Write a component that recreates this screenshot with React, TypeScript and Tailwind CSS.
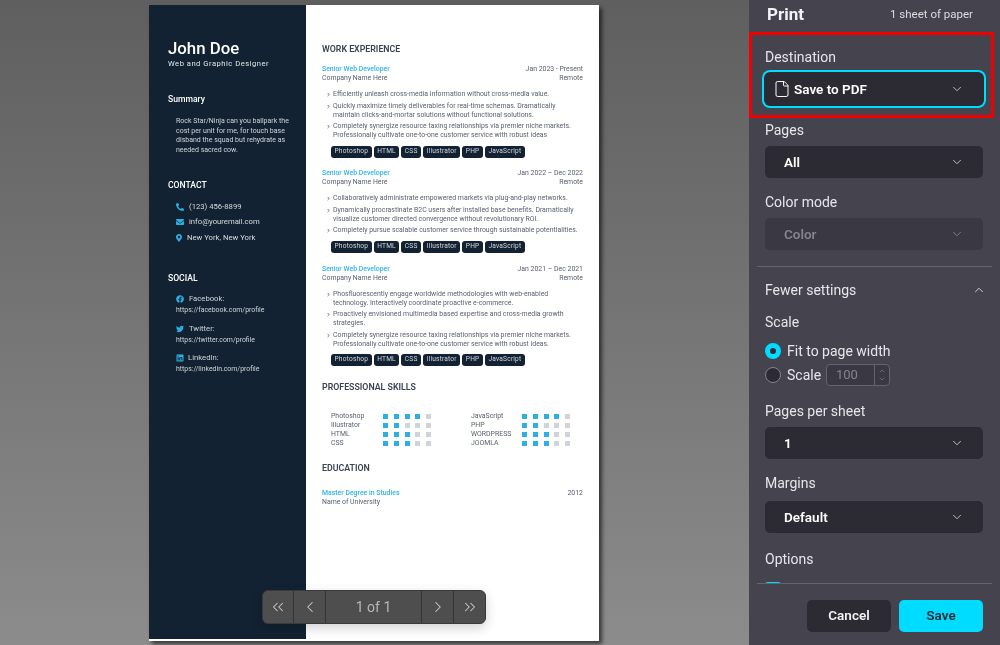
import { ChevronDown, ChevronLeft, ChevronRight, ChevronUp, ChevronsLeft, ChevronsRight, File } from "lucide-react"
import { FaEnvelope, FaFacebook, FaLinkedin, FaMapMarkerAlt, FaPhoneAlt, FaTwitter } from "react-icons/fa"

const TAGS = ["Photoshop", "HTML", "CSS", "Illustrator", "PHP", "JavaScript"]

const JOBS = [
    {
        date: "Jan 2023 - Present",
        mt: "mt-[11px]",
        listMt: "mt-[7px]",
        tagsMt: "mt-[6px]",
        bullets: [
            ["Efficiently unleash cross-media information without cross-media value."],
            ["Quickly maximize timely deliverables for real-time schemas. Dramatically", "maintain clicks-and-mortar solutions without functional solutions."],
            ["Completely synergize resource taxing relationships via premier niche markets.", "Professionally cultivate one-to-one customer service with robust ideas"],
        ],
    },
    {
        date: "Jan 2022 – Dec 2022",
        mt: "mt-[11px]",
        listMt: "mt-[7px]",
        tagsMt: "mt-[6px]",
        bullets: [
            ["Collaboratively administrate empowered markets via plug-and-play networks."],
            ["Dynamically procrastinate B2C users after installed base benefits. Dramatically", "visualize customer directed convergence without revolutionary ROI."],
            ["Completely pursue scalable customer service through sustainable potentialities."],
        ],
    },
    {
        date: "Jan 2021 – Dec 2021",
        mt: "mt-[12px]",
        listMt: "mt-[6.5px]",
        tagsMt: "mt-[5px]",
        bullets: [
            ["Phosfluorescently engage worldwide methodologies with web-enabled", "technology. Interactively coordinate proactive e-commerce."],
            ["Proactively envisioned multimedia based expertise and cross-media growth", "strategies."],
            ["Completely synergize resource taxing relationships via premier niche markets.", "Professionally cultivate one-to-one customer service with robust ideas."],
        ],
    },
]

const SKILLS_LEFT: [string, number][] = [["Photoshop", 4], ["Illustrator", 2], ["HTML", 3], ["CSS", 3]]
const SKILLS_RIGHT: [string, number][] = [["JavaScript", 4], ["PHP", 2], ["WORDPRESS", 3], ["JOOMLA", 3]]

function Skills({ items, labelWidth }: { items: [string, number][]; labelWidth: string }) {
    return (
        <div className="flex flex-col">
            {items.map(([name, level]) => (
                <div key={name} className="flex h-[9px] items-center">
                    <span className={`${labelWidth} text-[6.9px] text-[#5a6070]`}>{name}</span>
                    <div className="flex gap-[5.75px]">
                        {[1, 2, 3, 4, 5].map((n) => (
                            <span key={n} className={n <= level ? "h-[5px] w-[5px] bg-[#2bb0e6]" : "h-[5px] w-[5px] bg-[#d1d3da]"} />
                        ))}
                    </div>
                </div>
            ))}
        </div>
    )
}

function Heading({ children, className }: { children: string; className: string }) {
    return <h2 className={`h-[10px] text-[8.8px] leading-[10px] font-semibold text-[#3b4252] ${className}`}>{children}</h2>
}

function SideHeading({ children, className }: { children: string; className: string }) {
    return <h3 className={`h-[10px] text-[8.6px] leading-[10px] font-medium text-white ${className}`}>{children}</h3>
}

function Resume() {
    return (
        <div className="flex h-[634px] font-['Roboto',sans-serif] blur-[0.5px]">
            <aside className="w-[157px] bg-[#122232] pl-[19px] pt-[33px] text-[#d6dade]">
                <h1 className="h-[20px] text-[16.8px] leading-[20px] font-medium text-white">John Doe</h1>
                <p className="mt-[1px] text-[7.6px] leading-[10px] tracking-[0.5px] text-[#e4e7ea]">Web and Graphic Designer</p>
                <SideHeading className="mt-[25px]">Summary</SideHeading>
                <p className="mt-[13px] pl-[8px] text-[7px] leading-[9.5px] text-[#cfd4d9]">
                    Rock Star/Ninja can you ballpark the<br />
                    cost per unit for me, for touch base<br />
                    disband the squad but rehydrate as<br />
                    needed sacred cow.
                </p>
                <SideHeading className="mt-[25px]">CONTACT</SideHeading>
                <div className="mt-[12px] flex flex-col gap-[5px] pl-[8px] text-[7.7px] leading-[10px]">
                    <div className="flex h-[10px] items-center gap-[5px]"><FaPhoneAlt className="h-[8px] w-[8px] text-[#2bb0e6]" />(123) 456-8899</div>
                    <div className="mb-[1px] flex h-[10px] items-center gap-[5px]"><FaEnvelope className="h-[8px] w-[8px] text-[#2bb0e6]" />info@youremail.com</div>
                    <div className="flex h-[10px] items-center gap-[5px]"><FaMapMarkerAlt className="h-[8px] w-[6px] text-[#2bb0e6]" />New York, New York</div>
                </div>
                <SideHeading className="mt-[30px]">SOCIAL</SideHeading>
                <div className="mt-[11px] pl-[8px] text-[#cfd4d9]">
                    <div className="flex h-[10px] items-center gap-[5px] text-[7.7px]"><FaFacebook className="h-[8px] w-[8px] text-[#2bb0e6]" />Facebook:</div>
                    <p className="mt-[1px] text-[6.9px] leading-[10px]">https://facebook.com/profile</p>
                    <div className="mt-[9px] flex h-[10px] items-center gap-[5px] text-[7.7px]"><FaTwitter className="h-[8px] w-[8px] text-[#2bb0e6]" />Twitter:</div>
                    <p className="mt-[1px] text-[6.9px] leading-[10px]">https://twitter.com/profile</p>
                    <div className="mt-[8px] flex h-[10px] items-center gap-[4px] text-[7.7px]"><FaLinkedin className="h-[8px] w-[8px] text-[#2bb0e6]" />LinkedIn:</div>
                    <p className="mt-[1px] text-[6.9px] leading-[10px]">https://linkedin.com/profile</p>
                </div>
            </aside>
            <main className="flex-1 pl-[16px] pr-[16px] pt-[39px]">
                <Heading className="mb-0">WORK EXPERIENCE</Heading>
                {JOBS.map((job) => (
                    <section key={job.date} className={job.mt}>
                        <div className="flex h-[9px] items-center justify-between text-[6.9px] leading-[9px] text-[#5a6070]">
                            <span className="font-medium text-[#2fb3ea]">Senior Web Developer</span>
                            <span>{job.date}</span>
                        </div>
                        <div className="flex h-[9px] items-center justify-between text-[6.9px] leading-[9px] text-[#5a6070]">
                            <span>Company Name Here</span>
                            <span>Remote</span>
                        </div>
                        <ul className={`${job.listMt} flex flex-col gap-[2.5px] text-[6.9px] leading-[9px] text-[#5b6172]`}>
                            {job.bullets.map((lines) => (
                                <li key={lines[0]} className="flex">
                                    <ChevronRight className="mt-[2px] ml-[4px] mr-[2px] h-[5px] w-[5px] shrink-0 text-[#222]" strokeWidth={3} />
                                    <span className="whitespace-nowrap">
                                        {lines.map((line) => (
                                            <span key={line} className="block">{line}</span>
                                        ))}
                                    </span>
                                </li>
                            ))}
                        </ul>
                        <div className={`${job.tagsMt} flex gap-[2px] pl-[9px]`}>
                            {TAGS.map((tag) => (
                                <span key={tag} className="flex h-[12px] items-center rounded-[3px] bg-[#122232] px-[3.5px] text-[6.6px] tracking-[0.2px] text-[#d3d7db]">{tag}</span>
                            ))}
                        </div>
                    </section>
                ))}
                <Heading className="mt-[16px]">PROFESSIONAL SKILLS</Heading>
                <div className="mt-[20.5px] flex pl-[9px]">
                    <Skills items={SKILLS_LEFT} labelWidth="w-[52px]" />
                    <div className="w-[40px]" />
                    <Skills items={SKILLS_RIGHT} labelWidth="w-[51px]" />
                </div>
                <Heading className="mt-[14.5px]">EDUCATION</Heading>
                <div className="mt-[16.5px] flex h-[9px] items-center justify-between text-[6.9px] leading-[9px] text-[#5a6070]">
                    <span className="font-medium text-[#2fb3ea]">Master Degree in Studies</span>
                    <span>2012</span>
                </div>
                <p className="text-[6.9px] leading-[9px] text-[#5a6070]">Name of University</p>
            </main>
        </div>
    )
}

function Pager() {
    const btn = "flex h-full w-[32px] items-center justify-center border-r border-[#333]"
    return (
        <div className="absolute left-[262px] top-[590px] flex h-[34px] w-[224px] items-center overflow-hidden rounded-[6px] border border-[#3a3a3a] bg-[#4e4e4e] text-[#cdcdcd] shadow-[0_4px_12px_rgba(0,0,0,0.18)]">
            <div className="flex h-full w-[31px] items-center justify-center border-r border-[#333]"><ChevronsLeft className="h-[18px] w-[18px]" strokeWidth={1.4} /></div>
            <div className={btn}><ChevronLeft className="h-[18px] w-[18px]" strokeWidth={1.4} /></div>
            <div className="flex h-full w-[96px] items-center justify-center border-r border-[#333] font-['Roboto',sans-serif] text-[14px] text-[#b8b8b8]">1 of 1</div>
            <div className={btn}><ChevronRight className="h-[18px] w-[18px]" strokeWidth={1.4} /></div>
            <div className="flex h-full flex-1 items-center justify-center"><ChevronsRight className="h-[18px] w-[18px]" strokeWidth={1.4} /></div>
        </div>
    )
}

function Select({ label, value, className, disabled, focused, icon, gap = "mt-[7px]" }: { label: string; value: string; className: string; disabled?: boolean; focused?: boolean; icon?: boolean; gap?: string }) {
    return (
        <div className={className}>
            <p className="h-[20px] text-[14px] leading-[22px] text-[#e6e6ea]">{label}</p>
            <div
                className={`${gap} flex h-[32px] w-[218px] items-center justify-between rounded-[5px] pr-[19px] ${icon ? "pl-[8px]" : "pl-[19px]"} ${
                    disabled ? "bg-[#3a3842] text-[#85838c]" : "bg-[#2c2a33] text-white"
                } ${focused ? "shadow-[0_0_0_1px_#2c2a33,0_0_0_3px_#00dcff]" : ""}`}
            >
                <span className="flex items-center gap-[3px] text-[13.5px] font-semibold">
                    {icon && <File className="h-[18px] w-[18px]" strokeWidth={1.3} />}
                    {value}
                </span>
                <ChevronDown className={disabled ? "h-[14px] w-[14px] text-[#85838c]" : "h-[14px] w-[14px] text-[#d0d0d4]"} strokeWidth={1.5} />
            </div>
        </div>
    )
}

function PrintPanel() {
    return (
        <div className="flex h-[645px] w-[251px] flex-col bg-[#45434e] font-['Roboto',sans-serif]">
            <div className="h-[583px] overflow-hidden">
                <div className="flex h-[30px] items-center justify-between pl-[18px] pr-[27px]">
                    <span className="text-[17px] font-bold text-[#f3f3f5]">Print</span>
                    <span className="text-[11.5px] text-[#dcdce0]">1 sheet of paper</span>
                </div>
                <div className="pl-[16px]">
                    <Select label="Destination" value="Save to PDF" className="mt-[16px]" focused icon />
                    <Select label="Pages" value="All" className="mt-[14px]" />
                    <Select label="Color mode" value="Color" className="mt-[13px]" disabled />
                </div>
                <div className="mx-[8px] mt-[16px] h-px bg-[#65636d]" />
                <div className="mt-[13px] flex h-[20px] items-center justify-between pl-[16px] pr-[14px]">
                    <span className="text-[14px] leading-[20px] text-[#e6e6ea]">Fewer settings</span>
                    <ChevronUp className="h-[14px] w-[14px] text-[#e0e0e4]" strokeWidth={1.5} />
                </div>
                <div className="pl-[16px]">
                    <p className="mt-[12px] h-[20px] text-[14px] leading-[20px] text-[#e6e6ea]">Scale</p>
                    <div className="mt-[11px] flex h-[16px] items-center gap-[6px]">
                        <span className="h-[16px] w-[16px] rounded-full border-[5px] border-[#00dcff] bg-[#2c2a33]" />
                        <span className="text-[14px] text-[#e6e6ea]">Fit to page width</span>
                    </div>
                    <div className="mt-[8px] flex h-[16px] items-center">
                        <span className="h-[16px] w-[16px] rounded-full border border-[#85838c] bg-[#2c2a33]" />
                        <span className="ml-[6px] w-[39px] text-[14px] text-[#e6e6ea]">Scale</span>
                        <div className="flex h-[22px] w-[64px] shrink-0 overflow-hidden rounded-[4px] border border-[#65636d] bg-[#3a3842]">
                            <span className="flex-1 pl-[9px] text-[13px] leading-[20px] text-[#85838c]">100</span>
                            <span className="flex w-[15px] flex-col items-center justify-center border-l border-[#65636d] text-[#85838c]">
                                <ChevronUp className="h-[8px] w-[8px]" />
                                <ChevronDown className="h-[8px] w-[8px]" />
                            </span>
                        </div>
                    </div>
                    <Select label="Pages per sheet" value="1" className="mt-[17px]" />
                    <Select label="Margins" value="Default" className="mt-[13px]" gap="mt-[9px]" />
                    <p className="mt-[15px] h-[20px] text-[14px] leading-[22px] text-[#e6e6ea]">Options</p>
                    <div className="mt-[11px] flex items-center gap-[6px]">
                        <span className="h-[16px] w-[16px] shrink-0 rounded-[3px] bg-[#00dcff]" />
                        <span className="text-[14px] text-[#e6e6ea]">Print headers and footers</span>
                    </div>
                </div>
            </div>
            <div className="mx-[8px] h-px bg-[#65636d]" />
            <div className="flex justify-end gap-[8px] pr-[17px] pt-[16px]">
                <button className="h-[32px] w-[84px] rounded-[5px] bg-[#2c2a33] pb-[2px] text-[13.5px] font-semibold text-[#f3f3f5]">Cancel</button>
                <button className="h-[32px] w-[84px] rounded-[5px] bg-[#00dcff] pb-[2px] text-[13.5px] font-semibold text-[#2c2a33]">Save</button>
            </div>
        </div>
    )
}

export default function App() {
    return (
        <div className="relative flex h-[645px] w-[1000px] overflow-hidden bg-gradient-to-b from-[#5f5f5f] to-[#8c8c8c] will-change-transform">
            <div className="flex-1 pl-[149px] pt-[5px]">
                <div className="h-[636px] w-[450px] bg-white shadow-[3px_3px_4px_rgba(0,0,0,0.6)]">
                    <Resume />
                </div>
            </div>
            <PrintPanel />
            <Pager />
            <div className="absolute left-[749px] top-[32px] h-[86px] w-[245px] border-[3px] border-[#f00000]" />
        </div>
    )
}
